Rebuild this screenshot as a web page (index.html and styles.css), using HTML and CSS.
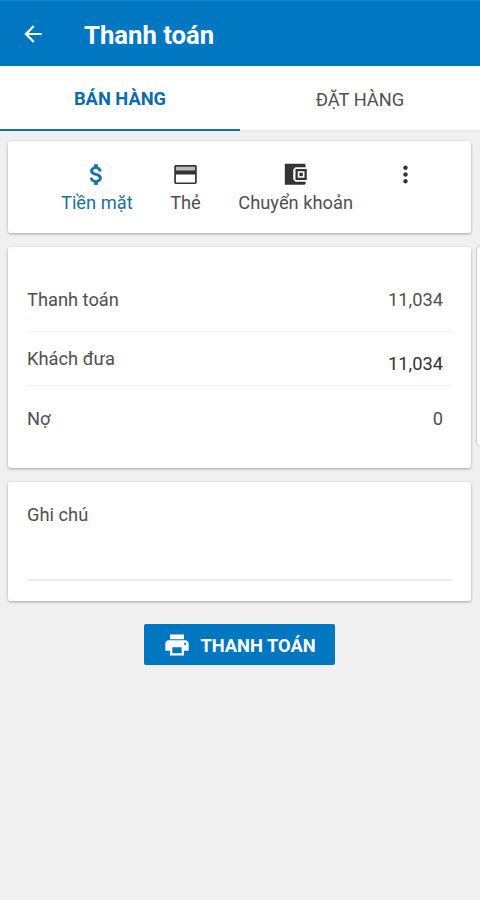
FILE: index.html
```html
<!DOCTYPE html>
<html lang="vi">
  <head>
    <meta charset="UTF-8" />
    <meta name="viewport" content="width=device-width, initial-scale=1.0" />
    <title>Thanh toán</title>
    <link rel="stylesheet" href="styles.css">
  </head>
  <body>
    <header class="app-bar">
      <svg class="back" viewBox="0 0 24 24"><path d="M20 11H7.83l5.59-5.59L12 4l-8 8 8 8 1.41-1.41L7.83 13H20v-2z"/></svg>
      <h1 class="title">Thanh toán</h1>
    </header>
    <nav class="tabs">
      <div class="tab active">BÁN HÀNG</div>
      <div class="tab">ĐẶT HÀNG</div>
    </nav>
    <main class="content">
      <section class="card methods">
        <div class="method selected">
          <svg viewBox="0 0 24 24"><path d="M11.8 10.9c-2.27-.59-3-1.2-3-2.15 0-1.09 1.01-1.85 2.7-1.85 1.78 0 2.44.85 2.5 2.1h2.21c-.07-1.72-1.12-3.3-3.21-3.81V3h-3v2.16c-1.94.42-3.5 1.68-3.5 3.61 0 2.31 1.91 3.46 4.7 4.13 2.5.6 3 1.48 3 2.41 0 .69-.49 1.79-2.7 1.79-2.06 0-2.87-.92-2.98-2.1h-2.2c.12 2.19 1.76 3.42 3.68 3.83V21h3v-2.15c1.95-.37 3.5-1.5 3.5-3.55 0-2.84-2.43-3.81-4.7-4.4z"/></svg>
          <span>Tiền mặt</span>
        </div>
        <div class="method">
          <svg viewBox="0 0 24 24"><path class="strip" d="M3 5h18v4H3z"/><path d="M21 3.500H3l-1 1v15l1 1h18l1-1v-15zM20.500 19h-17v-7h17zm0-10.500h-17V5h17z"/></svg>
          <span>Thẻ</span>
        </div>
        <div class="method">
          <svg viewBox="0 0 24 24"><path fill-rule="evenodd" d="M2.500 2.500h17.500l1 1V5.500H12l-2 2v9l2 2h9v1.500l-1 1H2.500zM12 7.200h10v9.600H12zm2 2v5.600h6V9.200z"/><path d="M15.500 10.500h3v3h-3z"/></svg>
          <span>Chuyển khoản</span>
        </div>
        <svg class="more" viewBox="0 0 24 24"><path d="M12 8c1.1 0 2-.9 2-2s-.9-2-2-2-2 .9-2 2 .9 2 2 2zm0 2c-1.1 0-2 .9-2 2s.9 2 2 2 2-.9 2-2-.9-2-2-2zm0 6c-1.1 0-2 .9-2 2s.9 2 2 2 2-.9 2-2-.9-2-2-2z"/></svg>
      </section>

      <section class="card amounts">
        <div class="row total">
          <span>Thanh toán</span>
          <span class="value">11,034</span>
        </div>
        <div class="row paid">
          <span>Khách đưa</span>
          <span class="value">11,034</span>
        </div>
        <div class="row debt">
          <span>Nợ</span>
          <span class="value">0</span>
        </div>
      </section>

      <section class="card note">
        <div class="note-field">Ghi chú</div>
      </section>

      <button class="pay">
        <svg viewBox="0 0 24 24"><path d="M19 8H5c-1.660 0-3 1.340-3 3v6h4v4h12v-4h4v-6c0-1.660-1.340-3-3-3zm-3 11H8v-5h8v5zm3-7c-.55 0-1-.45-1-1s.45-1 1-1 1 .45 1 1-.45 1-1 1zm-1-9H6v4h12V3z"/></svg>
        <span>THANH TOÁN</span>
      </button>
    </main>
    <div class="side-panel"></div>
  </body>
</html>
```
FILE: styles.css
```css
* {
  box-sizing: border-box;
}
body {
  margin: 0;
  height: 900px;
  overflow: hidden;
  background-color: #f0f0f0;
  font-family: Roboto, "Liberation Sans", sans-serif;
  font-size: 18.3px;
  line-height: 21px;
  color: #505050;
}
svg {
  display: block;
  fill: currentColor;
}
.app-bar {
  display: flex;
  align-items: center;
  height: 66px;
  padding: 2px 20px 0;
  background-color: #0077c0;
  border-top: 1px solid #1483c8;
  color: #fff;
}
.back {
  width: 26px;
  height: 26px;
  margin-top: -2px;
}
.title {
  margin: 1px 0 0 38px;
  font-size: 25.7px;
  font-weight: 700;
}
.tabs {
  display: flex;
  height: 65px;
  background-color: #fff;
}
.tab {
  flex: 1;
  padding-top: 3px;
  line-height: 62px;
  text-align: center;
  border-bottom: 1px solid #e4e6e8;
}
.tab.active {
  padding-top: 2px;
  font-weight: 700;
  color: #0a6cac;
  border-bottom: 2px solid #0f6fa9;
}
.content {
  display: flex;
  flex-direction: column;
  gap: 14px;
  padding: 10px 9px 0 8px;
}
.card {
  background-color: #fff;
  border-radius: 3px;
  box-shadow: 0 1px 3px rgba(0, 0, 0, 0.32);
}
.methods {
  display: flex;
  height: 92px;
  padding: 20px 0 0 53px;
}
.method {
  display: flex;
  flex-direction: column;
  align-items: center;
  gap: 4px;
  margin-right: 37.5px;
}
.method svg,
.more {
  width: 27px;
  height: 27px;
  color: #333;
}
.more {
  margin-left: 1px;
}
.strip {
  fill: #bbb;
}
.method.selected,
.method.selected svg {
  color: #16719f;
}
.method.selected svg {
  stroke: currentColor;
  stroke-width: 0.5px;
}
.amounts {
  height: 221px;
  padding: 23px 19px 0;
}
.row {
  display: flex;
  justify-content: space-between;
  padding-right: 9px;
  border-bottom: 1px solid #f1f1f1;
}
.total {
  height: 62px;
  padding-top: 19px;
}
.paid {
  height: 54px;
  padding-top: 16px;
}
.paid .value {
  padding-top: 5px;
  color: #333;
}
.debt {
  padding-top: 22px;
  border-bottom: none;
}
.note {
  height: 119px;
  padding: 22px 19px 0;
}
.note-field {
  height: 77px;
  border-bottom: 2px solid #ededed;
}
.pay {
  display: flex;
  align-items: center;
  align-self: center;
  justify-content: center;
  gap: 9px;
  width: 191px;
  height: 41px;
  margin-top: 9px;
  padding: 1px 0 0;
  border: none;
  border-radius: 2px;
  background-color: #0077c0;
  color: #fff;
  font: 700 18.3px Roboto, "Liberation Sans", sans-serif;
}
.pay svg {
  width: 28px;
  height: 28px;
}
/* drawer peeking in from the right edge */
.side-panel {
  position: absolute;
  top: 245px;
  right: -10px;
  width: 14px;
  height: 202px;
  background-color: #fff;
  border: 1px solid #c8c8c8;
  border-radius: 5px;
}
```
